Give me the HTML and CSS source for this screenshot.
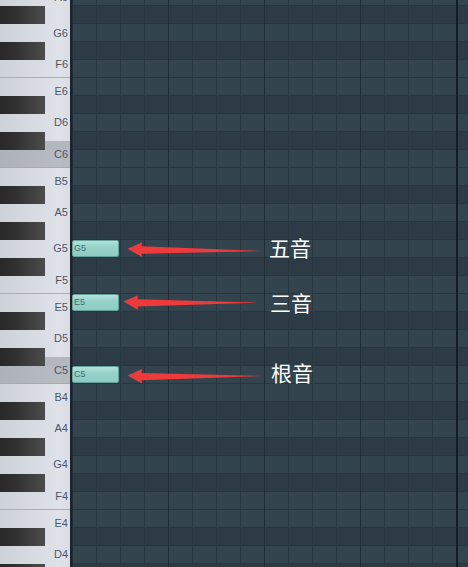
FILE: index.html
```html
<!DOCTYPE html>
<html lang="zh-CN">
<head>
    <meta charset="UTF-8">
    <title>Piano Roll - Chord</title>
    <link rel="stylesheet" href="styles.css">
</head>
<body>
    <div class="roll">
        <div class="row"><div class="key"><span class="key-label">A6</span></div><div class="lane"></div></div>
        <div class="row dark"><div class="key"><div class="black-key"></div></div><div class="lane"></div></div>
        <div class="row"><div class="key"><span class="key-label">G6</span></div><div class="lane"></div></div>
        <div class="row dark"><div class="key"><div class="black-key"></div></div><div class="lane"></div></div>
        <div class="row"><div class="key key-f"><span class="key-label up">F6</span></div><div class="lane"></div></div>
        <div class="row"><div class="key"><span class="key-label down">E6</span></div><div class="lane"></div></div>
        <div class="row dark"><div class="key"><div class="black-key"></div></div><div class="lane"></div></div>
        <div class="row"><div class="key"><span class="key-label nudge">D6</span></div><div class="lane"></div></div>
        <div class="row dark"><div class="key key-csharp"><div class="black-key"></div></div><div class="lane"></div></div>
        <div class="row"><div class="key key-c"><span class="key-label up">C6</span></div><div class="lane"></div></div>
        <div class="row"><div class="key"><span class="key-label down">B5</span></div><div class="lane"></div></div>
        <div class="row dark"><div class="key"><div class="black-key"></div></div><div class="lane"></div></div>
        <div class="row"><div class="key"><span class="key-label nudge">A5</span></div><div class="lane"></div></div>
        <div class="row dark"><div class="key"><div class="black-key"></div></div><div class="lane"></div></div>
        <div class="row">
            <div class="key"><span class="key-label nudge">G5</span></div>
            <div class="lane">
                <div class="note">G5</div>
                <svg class="arrow" width="136" height="18" viewBox="0 0 136 18"><polygon points="0.5,8.7 15,2.2 14.5,6.3 135,11 14.5,13.7 15,17"/></svg>
                <span class="mark">五音</span>
            </div>
        </div>
        <div class="row dark"><div class="key"><div class="black-key"></div></div><div class="lane"></div></div>
        <div class="row"><div class="key key-f"><span class="key-label up">F5</span></div><div class="lane"></div></div>
        <div class="row">
            <div class="key"><span class="key-label down">E5</span></div>
            <div class="lane">
                <div class="note">E5</div>
                <svg class="arrow arrow-short" width="136" height="18" viewBox="0 0 136 18"><polygon points="0.5,7.5 15,1.2 14.5,5.2 135,8.6 14.5,12.4 15,16"/></svg>
                <span class="mark mark-third">三音</span>
            </div>
        </div>
        <div class="row dark"><div class="key"><div class="black-key"></div></div><div class="lane"></div></div>
        <div class="row"><div class="key"><span class="key-label nudge">D5</span></div><div class="lane"></div></div>
        <div class="row dark"><div class="key key-csharp"><div class="black-key"></div></div><div class="lane"></div></div>
        <div class="row">
            <div class="key key-c"><span class="key-label up">C5</span></div>
            <div class="lane">
                <div class="note">C5</div>
                <svg class="arrow" width="136" height="18" viewBox="0 0 136 18"><polygon points="0.5,9.5 15,3 14.5,7 135,10 14.5,14.2 15,17.6"/></svg>
                <span class="mark mark-root">根音</span>
            </div>
        </div>
        <div class="row"><div class="key"><span class="key-label down">B4</span></div><div class="lane"></div></div>
        <div class="row dark"><div class="key"><div class="black-key"></div></div><div class="lane"></div></div>
        <div class="row"><div class="key"><span class="key-label nudge">A4</span></div><div class="lane"></div></div>
        <div class="row dark"><div class="key"><div class="black-key"></div></div><div class="lane"></div></div>
        <div class="row"><div class="key"><span class="key-label nudge">G4</span></div><div class="lane"></div></div>
        <div class="row dark"><div class="key"><div class="black-key"></div></div><div class="lane"></div></div>
        <div class="row"><div class="key key-f"><span class="key-label up">F4</span></div><div class="lane"></div></div>
        <div class="row"><div class="key"><span class="key-label down">E4</span></div><div class="lane"></div></div>
        <div class="row dark"><div class="key"><div class="black-key"></div></div><div class="lane"></div></div>
        <div class="row"><div class="key"><span class="key-label nudge">D4</span></div><div class="lane"></div></div>
        <div class="row dark"><div class="key key-csharp"><div class="black-key"></div></div><div class="lane"></div></div>
    </div>
</body>
</html>
```

FILE: styles.css
```css
html, body {
    margin: 0;
    padding: 0;
    height: 100%;
    overflow: hidden;
    background: #2c3b45;
}

.roll {
    margin-top: -12px;
    font-family: "Liberation Sans", Arial, sans-serif;
}

.row {
    display: flex;
    height: 18px;
}

/* keyboard */
.key {
    width: 70px;
    flex: none;
    display: flex;
    align-items: center;
    justify-content: flex-end;
    box-sizing: border-box;
    padding-right: 2px;
    background: linear-gradient(to right, #cdd1d8, #dfe3e9 85%, #d9dde3);
}

.key-c {
    background: linear-gradient(to right, #adb1b8, #b8bcc3 85%, #b3b7be);
    box-shadow: inset 0 -1px 0 #a6abb3;
}

.key-csharp {
    background:
        linear-gradient(to bottom, transparent 9px, #b3b7be 9px),
        linear-gradient(to right, #cdd1d8, #dfe3e9 85%, #d9dde3);
}

.key-f {
    box-shadow: inset 0 -1px 0 #a9aeb6;
}

.key-label {
    font-size: 11px;
    line-height: 13px;
    color: #4c566a;
}

/* labels sit on the white key, not on the row */
.key-label.up {
    margin-bottom: 10px;
}

.key-label.down {
    margin-top: 8px;
}

.key-label.nudge {
    margin-bottom: 2px;
}

.black-key {
    align-self: stretch;
    width: 45px;
    margin-right: auto;
    margin-left: -2px;
    padding-left: 2px;
    background: linear-gradient(to right, #262626, #323232 40%, #4c4c4c);
}

/* note grid */
.lane {
    flex: 1;
    display: flex;
    align-items: flex-start;
    border-left: 2px solid #1a242c;
    background:
        linear-gradient(#131d26, #131d26) 384px 0 / 2px 100% no-repeat,
        linear-gradient(to right, #202d36 0 1px, transparent 1px) 0 0 / 96px 100%,
        linear-gradient(to right, #28363f 0 1px, transparent 1px) 0 0 / 24px 100%,
        linear-gradient(to top, #28363f 0 1px, transparent 1px),
        #34444e;
}

.row.dark .lane {
    background-color: #2c3b45;
}

.note {
    width: 47px;
    height: 17px;
    box-sizing: border-box;
    border: 1px solid #66a19b;
    border-radius: 2px;
    background: linear-gradient(to bottom, #b0e2db, #98d3cb 40%, #8ecbc3);
    font-size: 9px;
    line-height: 15px;
    padding-left: 1px;
    color: #3f706d;
}

.arrow {
    flex: none;
    margin-left: 8px;
    fill: #ef3a3c;
}

.arrow-short {
    margin-left: 4px;
}

.mark {
    position: relative;
    z-index: 1;
    margin-left: 6px;
    margin-top: -2px;
    font-family: "Noto Sans CJK SC", sans-serif;
    font-size: 21px;
    line-height: 18px;
    color: #ffffff;
}

.mark-third {
    margin-left: 11px;
    margin-top: -1px;
}

.mark-root {
    margin-left: 8px;
    margin-top: -3px;
}
```
